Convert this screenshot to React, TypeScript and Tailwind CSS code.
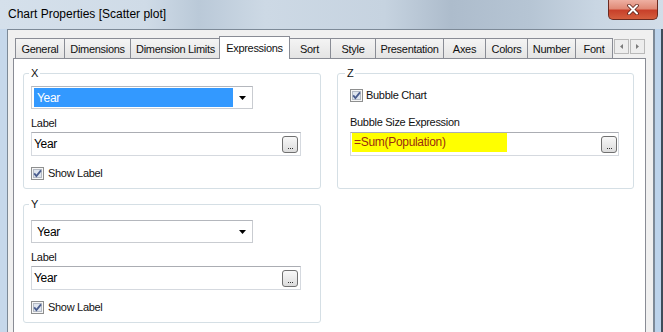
import React from "react";

const tabs = [
  { name: "General", w: "w-[50px]" },
  { name: "Dimensions", w: "w-[66px]" },
  { name: "Dimension Limits", w: "w-[90px]" },
  { name: "Expressions", w: "w-[71px]", active: true },
  { name: "Sort", w: "w-[42px]" },
  { name: "Style", w: "w-[45px]" },
  { name: "Presentation", w: "w-[68px]" },
  { name: "Axes", w: "w-[42px]" },
  { name: "Colors", w: "w-[42px]" },
  { name: "Number", w: "w-[48px]" },
  { name: "Font", w: "w-[37px]" },
];

function Check() {
  return (
    <svg width="13" height="13" viewBox="0 0 13 13" className="shrink-0">
      <rect x="0.5" y="0.5" width="12" height="12" fill="#f6f6f6" stroke="#8e8f8f" />
      <rect x="2.5" y="2.5" width="8" height="8" fill="#dfe5ee" stroke="#b4bac4" />
      <path d="M3.2 6.4 L5.4 9 L10 3.4" stroke="#4a5d8e" strokeWidth="1.8" fill="none" />
    </svg>
  );
}

function DotsButton() {
  return (
    <div className="w-[16px] h-[17px] shrink-0 rounded-[3px] border border-[#707070] bg-[linear-gradient(#f8f8f8,#dcdcdc)] flex items-end justify-center pb-[3px]">
      <div className="flex gap-[1px]">
        <span className="w-[1px] h-[1px] bg-[#333]" />
        <span className="w-[1px] h-[1px] bg-[#333]" />
        <span className="w-[1px] h-[1px] bg-[#333]" />
      </div>
    </div>
  );
}

function Combo({ selected }: { selected?: boolean }) {
  return (
    <div className="w-[222px] h-[23px] border border-[#c9ccd1] border-t-[#b4b7bd] bg-white flex pl-[2px] py-[1px]">
      <div className={`w-[199px] flex items-center pl-[3px] text-[12px] ${selected ? "bg-[#3399ff] text-white" : "text-black"}`}>
        Year
      </div>
      <div className="flex-1 flex items-center justify-center">
        <svg width="7" height="4" viewBox="0 0 7 4">
          <path d="M0 0 H7 L3.5 4 Z" fill="#000" />
        </svg>
      </div>
    </div>
  );
}

function TextBox() {
  return (
    <div className="w-[270px] h-[24px] border border-[#d5d9df] border-t-[#abadb3] bg-white flex items-center pl-[2px] pr-[2px]">
      <span className="flex-1 text-[12px] text-black">Year</span>
      <DotsButton />
    </div>
  );
}

function AxisGroup({ title, selected, box }: { title: string; selected?: boolean; box: string }) {
  return (
    <fieldset className={`w-[298px] rounded-[3px] border border-[#d5dfe5] pl-[7px] pb-[8px] ${box}`}>
      <legend className="-ml-[2px] px-[2px] text-[11px] leading-[14px]">{title}</legend>
      <div className="flex flex-col">
        <Combo selected={selected} />
        <div className="mt-[7px] text-[11px] leading-[14px]">Label</div>
        <div className="mt-[2px]">
          <TextBox />
        </div>
        <div className="mt-[11px] flex items-center gap-[4px] text-[11px] leading-[13px]">
          <Check />
          <span>Show Label</span>
        </div>
      </div>
    </fieldset>
  );
}

export default function App() {
  return (
    <div className="w-[663px] h-[332px] overflow-hidden flex flex-col bg-[#c8d8e9] font-['Liberation_Sans',Arial,sans-serif] tracking-[-0.3px] text-[#111]">
      {/* title bar */}
      <div className="h-[29px] shrink-0 flex items-start bg-[linear-gradient(90deg,#d5e0eb_0%,#cfdbe7_22%,#bac9d8_30%,#cdd9e5_40%,#c6d3e0_58%,#adbccc_68%,#b6c5d4_80%,#c9d6e3_90%,#d2dde8_100%)]">
        <span className="pl-[8px] pt-[6px] text-[12px] leading-[16px] tracking-[0px] text-black">
          Chart Properties [Scatter plot]
        </span>
        <div className="ml-auto mr-[5px] w-[50px] h-[20px] rounded-b-[5px] border border-t-0 border-[#6b2a20] bg-[linear-gradient(#eeb0a2_0%,#e08a77_45%,#c8402a_55%,#d45e3e_100%)] flex items-center justify-center">
          <svg width="12" height="11" viewBox="0 0 12 11">
            <path d="M2 1.5 L10 9.5 M10 1.5 L2 9.5" stroke="#5c2118" strokeWidth="3.6" strokeLinecap="round" />
            <path d="M2 1.5 L10 9.5 M10 1.5 L2 9.5" stroke="#ffffff" strokeWidth="2" strokeLinecap="round" />
          </svg>
        </div>
      </div>

      {/* body */}
      <div className="flex-1 flex min-h-0">
        <div className="w-[7px] bg-[#c6d8eb]" />
        <div className="flex-1 border-l border-t border-r border-[#7d8a98] bg-[#f0f0f0] pl-[5px] pr-[7px] pt-[6px] flex flex-col">
          {/* tab strip */}
          <div className="h-[22px] shrink-0 flex items-end pl-[2px] text-[11px]">
            {tabs.map((t, i) =>
              t.active ? (
                <div
                  key={t.name}
                  className={`${t.w} h-[23px] -mb-px -ml-[2px] relative z-10 bg-white border border-b-0 border-[#898c95] flex items-center justify-center`}
                >
                  {t.name}
                </div>
              ) : (
                <div
                  key={t.name}
                  className={`${t.w} h-[20px] ${i === 0 ? "border-l" : ""} ${i === 4 ? "-ml-px" : ""} border-t border-r border-[#898c95] bg-[linear-gradient(#f4f4f4,#e4e4e4)] flex items-center justify-center pt-[1px]`}
                >
                  {t.name}
                </div>
              )
            )}
            <div className="ml-px mb-[4px] flex gap-[1px]">
              <div className="w-[15px] h-[15px] border border-[#b9b9b9] bg-[#ededed] flex items-center justify-center">
                <svg width="3" height="5" viewBox="0 0 3 5">
                  <path d="M3 0 V5 L0 2.5 Z" fill="#7a7a7a" />
                </svg>
              </div>
              <div className="w-[15px] h-[15px] border border-[#b9b9b9] bg-[#ededed] flex items-center justify-center">
                <svg width="3" height="5" viewBox="0 0 3 5">
                  <path d="M0 0 V5 L3 2.5 Z" fill="#7a7a7a" />
                </svg>
              </div>
            </div>
          </div>

          {/* panel */}
          <div className="h-[300px] shrink-0 border border-[#898c95] bg-white pl-[9px] pt-[7px] flex items-start gap-[16px]">
            <div className="flex flex-col">
              <AxisGroup title="X" selected box="pt-[6px]" />
              <AxisGroup title="Y" box="mt-[8px] pt-[9px]" />
            </div>

            <fieldset className="w-[297px] h-[123px] rounded-[3px] border border-[#d5dfe5] pl-[12px]">
              <legend className="-ml-[5px] px-[2px] text-[11px] leading-[14px]">Z</legend>
              <div className="flex flex-col pt-[9px]">
                <div className="flex items-center gap-[3px] text-[11px] leading-[13px]">
                  <Check />
                  <span>Bubble Chart</span>
                </div>
                <div className="mt-[13px] text-[11px] leading-[14px]">Bubble Size Expression</div>
                <div className="mt-[3px] w-[269px] h-[24px] border border-[#d5d9df] border-t-[#abadb3] bg-white flex items-center pl-[1px] pr-[1px]">
                  <div className="flex-1 self-stretch">
                    <div className="w-[155px] h-[19px] bg-[#ffff00] pl-[2px] text-[12px] leading-[19px] text-[#9a2c10]">
                      =Sum(Population)
                    </div>
                  </div>
                  <DotsButton />
                </div>
              </div>
            </fieldset>
          </div>
        </div>
        <div className="w-[9px] bg-[#bcd3eb] border-l border-[#7d8a98] border-r-[2px] border-r-[#3f4c5a]" />
      </div>
    </div>
  );
}
